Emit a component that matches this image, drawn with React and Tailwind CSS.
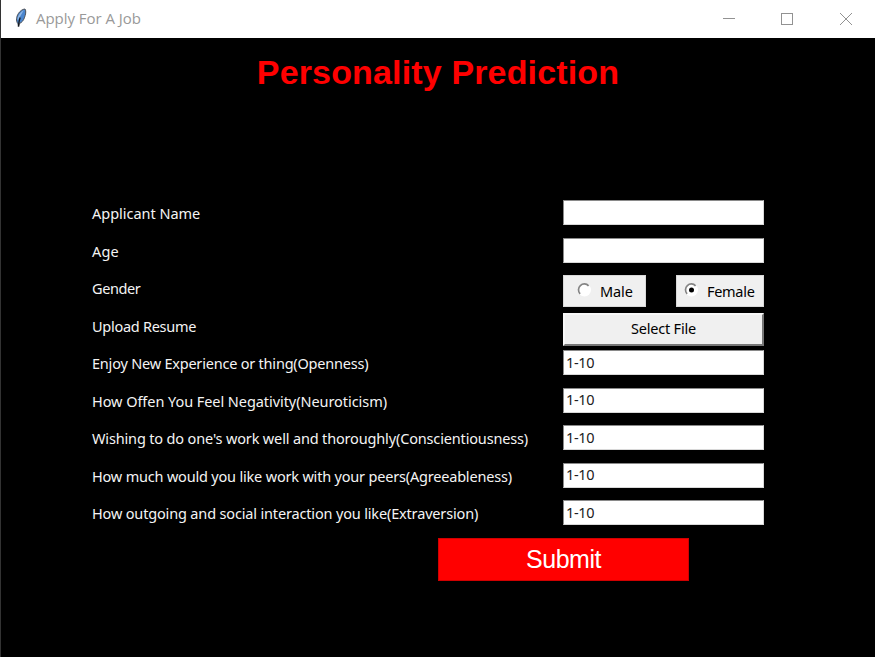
const ENTRY =
  'block h-[25px] w-[201px] border border-b-[#d8d8d8] border-r-[#d8d8d8] border-t-[#8a8a8a] border-l-[#8a8a8a] bg-white pb-[2px] pl-[2px] text-[14.5px] leading-[20px] text-[#202020] outline-none';

function Entry({ value = '' }) {
  return <input className={ENTRY} defaultValue={value} />;
}

function Radio({ label, checked, className }) {
  return (
    <div className={`flex h-[32px] items-center border border-[#d9d9d9] bg-[#f0f0f0] text-black ${className}`}>
      <svg width="16" height="16" viewBox="0 0 16 16" fill="none" className="mb-[2px] shrink-0">
        <circle cx="7.5" cy="8" r="6.5" fill="#fff" />
        <path d="M3.1 11.8A5.8 5.8 0 0 1 11.6 3.8" stroke="#858585" strokeWidth="1.7" />
        {checked && <circle cx="7.5" cy="8" r="2.5" fill="#000" />}
      </svg>
      <span className="ml-[7px] whitespace-nowrap pt-px">{label}</span>
    </div>
  );
}

const ROWS = [
  { label: 'Applicant Name', tracking: 'tracking-[-0.02px]', field: <Entry /> },
  { label: 'Age', tracking: 'tracking-[0.2px]', field: <Entry /> },
  {
    label: 'Gender',
    tracking: 'tracking-[-0.4px]',
    field: (
      <div className="flex w-[201px] justify-between">
        <Radio label="Male" className="w-[83px] pl-[13px] tracking-[-0.1px]" />
        <Radio label="Female" checked className="w-[88px] pl-[7px]" />
      </div>
    ),
  },
  {
    label: 'Upload Resume',
    tracking: 'tracking-[-0.28px]',
    field: (
      <button className="block h-[33px] w-[201px] border-2 border-b-[#777] border-r-[#777] border-t-[#f8f8f8] border-l-[#f8f8f8] bg-[#f0f0f0] pb-[3px] leading-[26px] tracking-[-0.2px] text-black">
        Select File
      </button>
    ),
  },
  { label: 'Enjoy New Experience or thing(Openness)', tracking: 'tracking-[-0.21px]', field: <Entry value="1-10" /> },
  { label: 'How Offen You Feel Negativity(Neuroticism)', tracking: 'tracking-[-0.06px]', field: <Entry value="1-10" /> },
  { label: "Wishing to do one's work well and thoroughly(Conscientiousness)", tracking: 'tracking-[-0.155px]', field: <Entry value="1-10" /> },
  { label: 'How much would you like work with your peers(Agreeableness)', tracking: 'tracking-[-0.19px]', field: <Entry value="1-10" /> },
  { label: 'How outgoing and social interaction you like(Extraversion)', tracking: 'tracking-[-0.16px]', field: <Entry value="1-10" /> },
];

function Feather() {
  return (
    <svg width="14" height="22" viewBox="0 0 14 22">
      <path
        d="M11 2 C12.500 4 11.5 8 10.400 10.8 C9.400 13.5 7.8 15.600 5.400 16.500 L4.8 19.500 L3.8 16.5 C1.8 14 2.4 9.500 4.4 6.500 C6 4 8.5 2.200 11 2Z"
        fill="#4a86cf"
        stroke="#4b4f55"
        strokeWidth="1"
      />
      <path d="M9.800 3.200 C6.8 4.8 3.1 9 3.600 13.5 C5.5 10.500 7.5 7 9.800 3.2Z" fill="#93b8e4" />
      <path d="M6.200 10.500 C5.400 12.500 4.8 15 4.300 19.500" fill="none" stroke="#14171c" strokeWidth="1.3" />
    </svg>
  );
}

export default function App() {
  return (
    <div className="flex h-[657px] w-[875px] flex-col overflow-hidden border-l border-[#333] bg-black font-['Noto_Sans','Open_Sans',sans-serif] text-[14.5px] tracking-[-0.3px] text-[#f4f4f4]">
      <header className="flex h-[38px] shrink-0 items-center bg-white text-[#999]">
        <div className="ml-[13px] mb-[2px]">
          <Feather />
        </div>
        <span className="mb-px ml-[8px] font-['Open_Sans',sans-serif] text-[15px] font-normal tracking-[-0.03px] text-[#999]">Apply For A Job</span>
        <svg className="ml-auto mr-[22px]" width="131" height="14" viewBox="0 0 131 14" fill="none" stroke="#929292">
          <path d="M1 6.5H13" />
          <rect x="59.500" y="1.500" width="11" height="11" />
          <path d="M118 1L130 13M130 1L118 13" />
        </svg>
      </header>
      <h1 className="mt-[12px] h-[44px] text-center font-['Liberation_Sans',sans-serif] text-[34px] font-bold leading-[44px] tracking-[0.15px] text-[#ff0000]">
        Personality Prediction
      </h1>
      <main className="mt-[106px] grid auto-rows-[37.5px] grid-cols-[471px_201px] pl-[91px]">
        {ROWS.map(({ label, tracking, field }) => (
          <div key={label} className="contents">
            <span className={`whitespace-nowrap leading-[27px] ${tracking}`}>{label}</span>
            <div>{field}</div>
          </div>
        ))}
      </main>
      <button className="ml-[437px] h-[43px] w-[251px] shrink-0 border border-[#d00000] bg-[#ff0000] font-['Liberation_Sans',sans-serif] text-[25px] leading-[40px] tracking-[-0.5px] text-white">
        Submit
      </button>
    </div>
  );
}
